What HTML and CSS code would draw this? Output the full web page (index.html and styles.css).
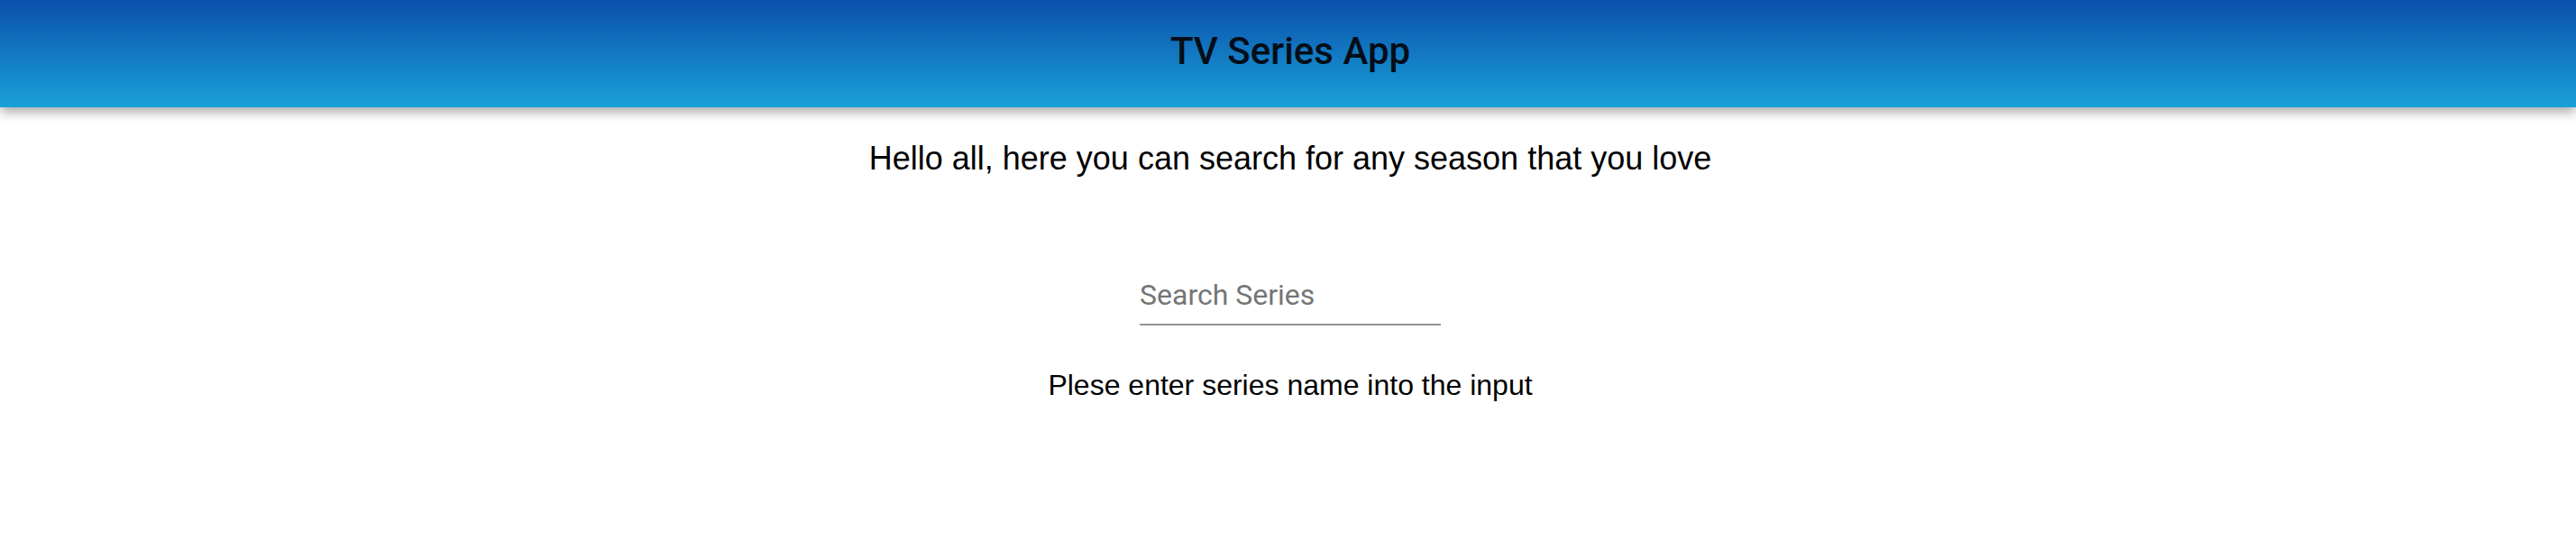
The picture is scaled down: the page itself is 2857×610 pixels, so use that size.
FILE: index.html
```html
<!DOCTYPE html>
<html>
<head>
<meta charset="utf-8">
<link rel="stylesheet" href="styles.css">
</head>
<body>
<header class="app-header">
  <h1 class="app-title">TV Series App</h1>
</header>
<main class="content">
  <p class="intro">Hello all, here you can search for any season that you love</p>
  <div class="search-field">
    <input class="search-input" type="text" placeholder="Search Series">
  </div>
  <p class="hint">Plese enter series name into the input</p>
</main>
</body>
</html>
```
FILE: styles.css
```css
html, body {
  margin: 0;
  padding: 0;
  background: #ffffff;
}
body {
  font-family: "Liberation Sans", Arial, sans-serif;
  color: #000;
}
.app-header {
  height: 119px;
  background: linear-gradient(to bottom, #0b50ad 0%, #1aa1d7 100%);
  box-shadow: 0 5px 12px rgba(0, 0, 0, 0.35);
  display: flex;
  align-items: center;
  justify-content: center;
  padding-left: 5px;
  position: relative;
  z-index: 1;
}
.app-title {
  margin: 0;
  font-family: Roboto, "Liberation Sans", sans-serif;
  font-weight: 500;
  font-size: 42px;
  line-height: 1;
  color: #050e18;
  padding-bottom: 6px;
}
.content {
  display: flex;
  flex-direction: column;
  align-items: center;
  padding-left: 5px;
}
.intro {
  margin: 36px 0 0;
  font-size: 36px;
  line-height: 42px;
}
.search-field {
  margin-top: 111px;
  width: 334px;
  border-bottom: 2px solid #949494;
  padding-bottom: 13px;
}
.search-input {
  display: block;
  width: 100%;
  border: 0;
  outline: none;
  padding: 0;
  margin: 0;
  background: transparent;
  font-family: Roboto, "Liberation Sans", sans-serif;
  font-size: 32px;
  line-height: 38px;
  height: 38px;
  color: #222;
}
.search-input::placeholder {
  color: #757575;
  opacity: 1;
}
.hint {
  margin: 47px 0 0;
  font-size: 32px;
  line-height: 38px;
}
```
